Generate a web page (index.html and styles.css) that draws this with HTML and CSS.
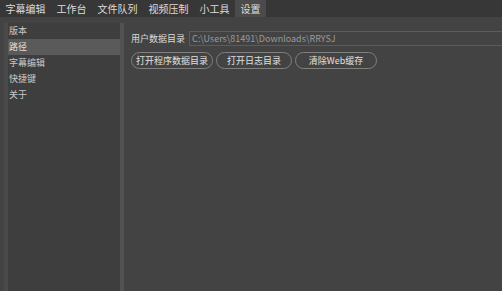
FILE: index.html
```html
<!DOCTYPE html>
<html lang="zh">

<head>
    <meta charset="UTF-8">
    <title>设置</title>
    <link rel="stylesheet" href="styles.css">
</head>

<body>
    <ul class="tab-bar">
        <li>字幕编辑</li>
        <li>工作台</li>
        <li>文件队列</li>
        <li>视频压制</li>
        <li>小工具</li>
        <li class="active">设置</li>
    </ul>

    <div id="main">
        <div class="side">
            <ul class="menu">
                <li>版本</li>
                <li class="selected">路径</li>
                <li>字幕编辑</li>
                <li>快捷键</li>
                <li>关于</li>
            </ul>
        </div>
        <div class="splitter"></div>
        <div class="content">
            <div class="field">
                <label>用户数据目录</label>
                <input type="text" value="C:\Users\81491\Downloads\RRYSJ" readonly>
            </div>
            <div class="buttons">
                <button>打开程序数据目录</button>
                <button>打开日志目录</button>
                <button class="wide">清除Web缓存</button>
            </div>
        </div>
    </div>
</body>

</html>
```

FILE: styles.css
```css
* {
    box-sizing: border-box;
}

html,
body {
    height: 100%;
}

body {
    margin: 0;
    display: flex;
    flex-direction: column;
    background-color: #434343;
    color: #dcdcdc;
    font-family: "Noto Sans CJK SC", "Noto Sans", sans-serif;
    font-size: 9px;
    overflow: hidden;
}

ul {
    margin: 0;
    padding: 0;
}

li {
    list-style: none;
}

.tab-bar {
    display: flex;
    height: 17px;
    background-color: #373737;
    font-size: 10px;
}

.tab-bar li {
    padding: 0 5.5px;
    line-height: 17px;
}

.tab-bar li.active {
    background-color: #4b4b4b;
}

#main {
    flex: 1;
    display: flex;
    padding: 6px 0 0 4px;
}

.side {
    width: 116px;
    border-left: 4px solid #4a4a4a;
    background-color: #3e3e3e;
}

.menu li {
    height: 16px;
    line-height: 16px;
    padding-left: 1px;
    color: #c8c8c8;
}

.menu li.selected {
    background-color: #5a5a5a;
    color: #e0e0e0;
}

.splitter {
    width: 4px;
    background-color: #525252;
}

.content {
    flex: 1;
    padding: 8px 0 0 7px;
}

.field {
    display: flex;
    align-items: center;
    gap: 4px;
}

.field label {
    white-space: nowrap;
}

.field input {
    flex: 1;
    height: 15px;
    padding: 0 2px;
    border: 1px solid #5c5c5c;
    border-right: none;
    background-color: #434343;
    color: #9a9a9a;
    font-family: "Noto Sans CJK SC", "Noto Sans", sans-serif;
    font-size: 9px;
    outline: none;
}

.buttons {
    display: flex;
    gap: 3px;
    margin-top: 6px;
}

.buttons button {
    min-width: 76px;
    height: 17px;
    padding: 0 4px;
    border: 1px solid #808080;
    border-radius: 9px;
    background-color: #434343;
    color: #e0e0e0;
    font-family: "Noto Sans CJK SC", "Noto Sans", sans-serif;
    font-size: 9px;
    line-height: 15px;
}

.buttons button.wide {
    min-width: 82px;
}
```
